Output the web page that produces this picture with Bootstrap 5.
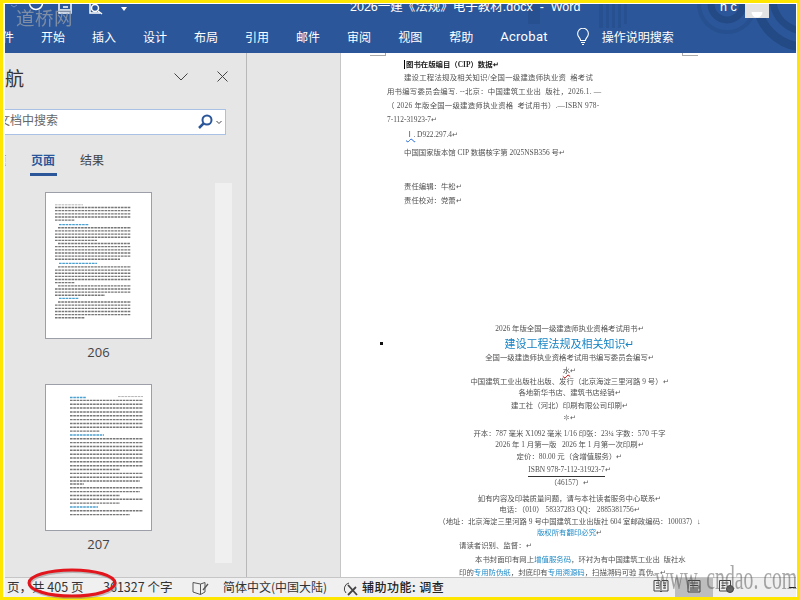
<!DOCTYPE html>
<html lang="zh">
<head>
<meta charset="utf-8">
<title>Word</title>
<link href="https://cdn.jsdelivr.net/npm/bootstrap@5.3.0/dist/css/bootstrap.min.css" rel="stylesheet">
<style>
html,body{margin:0;height:600px;overflow:hidden;background:#ffe600}
body{font-family:"Noto Sans CJK SC","Liberation Sans",sans-serif}
.wframe{width:800px;height:600px;padding:3px 3px 3px 3px;overflow:hidden;position:relative}
.wwin{width:794px;height:594px;background:#fff;border:solid #fff;border-width:1px 1px 0 2px;overflow:hidden}
.wtop{height:49px;background:#2b579a;color:#fff;position:relative;overflow:hidden;flex:none}
.wdeco{position:absolute;left:0;top:0}
.wtitle{height:22px;overflow:hidden;position:relative;font:12.5px/14px "Liberation Sans","Noto Sans CJK SC",sans-serif}
.wtitle-t{margin-left:345px;margin-top:-4px;white-space:nowrap}
.wuser{position:absolute;left:715px;top:-4px;font:12.5px/14px "Liberation Sans",sans-serif;white-space:pre}
.wavatar{position:absolute;left:740px;top:0;width:24px;height:14px;background:#e3e3e3;overflow:hidden}
.wtabs{height:27px;font-size:12px;line-height:21px;gap:27px;margin-left:-15px;white-space:nowrap}
.wtabs .wac{font:13px/21px "Roboto","Liberation Sans",sans-serif;letter-spacing:.3px}
.wtell{margin-left:1px;margin-right:-15px;height:21px}
.wmain{height:524px;flex:none}
.wnav{width:241px;background:#e6e6e6;position:relative;flex:none}
.wnavhead{height:56px;font-size:19px;line-height:24px;padding-top:13px;position:relative}
.wnavh{margin-left:-19px;color:#333;white-space:nowrap}
.wnavbtn{position:absolute}
.wchev{left:169px;top:20px}
.wclose{left:212px;top:18px}
.wsearch{width:221px;height:26px;background:#fff;border:1px solid #a9c1e5;border-left:0;font-size:12px;line-height:20px;color:#666;white-space:nowrap;overflow:hidden;position:relative}
.wsearch-t{margin-left:-19px}
.wsicon{position:absolute;left:193px;top:4px}
.wstabs{height:33px;margin-top:15px;font-size:12px;line-height:20px;color:#444;position:relative;white-space:nowrap;gap:25px;margin-left:-23px}
.wstab-on{color:#2b579a;font-weight:700;position:relative}
.wstab-on::after{content:"";position:absolute;left:-1px;right:-2px;top:23px;height:3px;background:#2b579a}
.wthumbs{padding-left:40px;padding-top:9px;position:relative}
.wtrack{position:absolute;left:210px;top:0;width:17px;height:380px;background:#f0f0f0}
.wthumb{display:block;width:107px;height:147px;background:#fff;border:1px solid #9c9fa8}
.wthumb g{filter:blur(.35px)}
.wnum{width:107px;height:45px;text-align:center;font:13px/26px "Open Sans","Liberation Sans",sans-serif;color:#444}
.wgap{width:95px;background:#e6e6e6;border-left:1px solid #b8b8b8;border-right:1px solid #c6c6c6;flex:none}
.wpage{flex:1;position:relative;overflow:hidden;background:#fff}
.wcrop{position:absolute;top:0;width:16px;height:3px;border-bottom:1px solid #aaa}
.wcl{left:29px;border-right:1px solid #aaa}
.wcr{left:341px;border-left:1px solid #aaa}
.wdoc{font:7.4px/12px "Liberation Serif","Noto Sans CJK SC",serif;color:#505050;white-space:nowrap;filter:blur(.25px)}
.wdoc b{font-weight:400;color:#1f8ac7}
.ln{height:12px}
.lc{text-align:center;padding-left:2px}
.ll{padding-left:46px}
.lm{padding-left:65px}
.lt{padding-left:63px}
.lp1{padding-left:118px}
.lp2{padding-left:134px}
.wj{letter-spacing:.22px}
.wdark{color:#222;font-weight:700}
.whead{color:#1784c3!important;font-size:11px;line-height:12px}
.wul{border-bottom:1px solid #333;display:inline-block;line-height:10px;height:12px}
.wsq{position:absolute;left:39px;top:289px;width:3px;height:3px;background:#111}
.wred{text-decoration:underline wavy #c00 .5px}
.wblu{text-decoration:underline wavy #2468d8 .5px}
.wcur{border-left:1px solid #000;padding-left:1px}
.gm{margin-top:-1px}.g0{margin-top:0}.g1{margin-top:1px}.g2{margin-top:2px}.g3{margin-top:3px}.g4{margin-top:4px}.g6{margin-top:6px}.g22{margin-top:22px}.g116{margin-top:116px}
.wstat{height:20px;background:#f0f0f0;border-top:1px solid #c6c6c6;font-size:12px;line-height:17px;color:#333;position:relative;white-space:nowrap;overflow:hidden;flex:none}
.wst1{margin-left:2px;width:96px;flex:none;font-size:12.5px}
.wst2{width:89px;flex:none;font-size:12.5px}
.wst3{width:31px;flex:none}
.wst4{width:120px;flex:none}
.wst5{width:19px;flex:none}
.wst6{font-weight:500;color:#222;width:285px;flex:none;letter-spacing:.5px}
.wview{width:28px;height:19px;flex:none}
.wview-on{background:#bdbdbd;width:38px}
.wzoom{width:7px;height:1px;background:#222;align-self:center;margin-left:48px;flex:none}
.wmark1{position:absolute;left:16px;top:5px;font:18.5px/28px "Liberation Serif","Noto Sans CJK SC",serif;color:#8d97a5;letter-spacing:.5px;opacity:.85;white-space:nowrap;pointer-events:none}
.wmark2{position:absolute;left:655px;top:561px;font:34px/34px "Liberation Serif",serif;color:#555;opacity:.5;white-space:nowrap;transform:scaleX(.58);transform-origin:left top;pointer-events:none}
.wellipse{position:absolute;left:26px;top:566px;pointer-events:none}
</style>
</head>
<body>
<div class="wframe">
<div class="wwin d-flex flex-column">
  <div class="wtop">
    <svg class="wdeco" width="792" height="49" viewBox="0 0 792 49" fill="none">
      <g fill="#275091">
        <rect x="523" y="0" width="12" height="20"/><rect x="594" y="0" width="4" height="24"/><rect x="601" y="0" width="3" height="24"/><rect x="607" y="0" width="3" height="24"/><rect x="613" y="0" width="3" height="24"/><rect x="619" y="0" width="3" height="20"/>
      </g>
      <circle cx="722" cy="0" r="16" stroke="#244a85" stroke-width="7"/>
      <circle cx="722" cy="0" r="28" stroke="#26508f" stroke-width="4"/>
      <circle cx="800" cy="-5" r="48" stroke="#244a85" stroke-width="9"/>
      <circle cx="800" cy="-5" r="32" stroke="#244a85" stroke-width="7"/>
      <g stroke="#fff" stroke-width="1.5">
        <circle cx="31" cy="-1" r="6.5" fill="none"/>
        <path d="M29 -2v-4h5"/>
        <path d="M55 6h10M54 0v9h12V0M58 3h5" fill="none"/>
        <path d="M85 -2v11h10" fill="none"/>
        <circle cx="90" cy="4" r="3.5" fill="none"/>
        <path d="M93 7l4 3" />
      </g>
      <path d="M116 3h6l-3 4z" fill="#fff"/>
      <path d="M6 1l3 2 3-2" stroke="#6d8cbc"/>
    </svg>
    <div class="wtitle"><div class="wtitle-t">2026一建《法规》电子教材.docx&nbsp; -&nbsp; Word</div></div>
    <div class="wuser">h c</div>
    <div class="wavatar"><svg width="24" height="14" viewBox="0 0 24 14"><circle cx="12" cy="0" r="5.5" fill="#fff"/><path d="M3 14c0-6 4-8 9-8s9 2 9 8z" fill="#fff"/></svg></div>
    <div class="wtabs d-flex position-relative">
      <span>文件</span><span>开始</span><span>插入</span><span>设计</span><span>布局</span><span>引用</span><span>邮件</span><span>审阅</span><span>视图</span><span>帮助</span><span class="wac">Acrobat</span>
      <span class="wtell d-flex align-items-center"><svg width="14" height="18" viewBox="0 0 14 18" fill="none" stroke="#fff" stroke-width="1.1"><path d="M4.6 12.5c0-2.4-3-3.6-3-6.8a5.4 5.4 0 0 1 10.8 0c0 3.2-3 4.4-3 6.8z"/><path d="M5 14.5h4M6 16.5h2"/></svg></span>
      <span>操作说明搜索</span>
    </div>
  </div>
  <div class="wmain d-flex">
    <div class="wnav">
      <div class="wnavhead"><div class="wnavh">导航</div>
        <svg class="wnavbtn wchev" width="14" height="8" viewBox="0 0 14 8" fill="none" stroke="#444"><path d="M.5.5 7 7l6.5-6.5"/></svg>
        <svg class="wnavbtn wclose" width="11" height="11" viewBox="0 0 11 11" fill="none" stroke="#444"><path d="M.5.5l10 10M10.5.5l-10 10"/></svg>
      </div>
      <div class="wsearch"><div class="wsearch-t">在文档中搜索</div>
        <svg class="wsicon" width="24" height="16" viewBox="0 0 24 16" fill="none"><circle cx="9" cy="6" r="4.5" stroke="#2b579a" stroke-width="2"/><path d="M5.5 9.5 1 14" stroke="#2b579a" stroke-width="2.5"/><path d="M18.5 7l2.500 2.500L23.500 7" stroke="#444"/></svg>
      </div>
      <div class="wstabs d-flex"><span>标题</span><span class="wstab-on">页面</span><span>结果</span></div>
      <div class="wthumbs">
        <div class="wtrack"></div>
        <svg class="wthumb" viewBox="0 0 105 145" fill="none" stroke="#777" stroke-width="1.5" stroke-dasharray="2.6 .7">
          <g transform="translate(0 1) scale(1 .9)">
          <path d="M9 12h28" stroke="#aaa" stroke-width=".9"/>
          <path d="M9 15h76M9 18.5h76M9 22h76M9 25.5h76M9 29h20"/>
          <path d="M13 34h30" stroke="#4aa0d0"/>
          <path d="M12 37.5h73M9 41h76M9 44.5h76M9 48h76M9 51.5h42M12 55h72M9 58.5h76M9 62h76M9 65.5h76M9 69h76M9 72.5h65"/>
          <path d="M13 77h38" stroke="#4aa0d0"/>
          <path d="M12 81h73M9 84.5h76M9 88h76M9 91.5h76M9 95h76M9 98.5h20M12 102h73M9 105.5h76M9 109h76M9 112.5h50"/>
          <path d="M13 116h20" stroke="#4aa0d0"/>
          <path d="M12 120h73M9 123.5h76M9 127h76M9 130.5h76M9 134h76M9 137.5h30"/>
          </g>
        </svg>
        <div class="wnum">206</div>
        <svg class="wthumb" viewBox="0 0 105 145" fill="none" stroke="#777" stroke-width="1.5" stroke-dasharray="2.6 .7">
          <g transform="translate(0 1) scale(1 .96)">
          <path d="M24 12h16" stroke="#4aa0d0"/><path d="M72 11h25" stroke="#aaa" stroke-width=".9"/>
          <path d="M24 15h73M24 19h73M24 23h73M24 27h73M24 31h73M24 35h73M24 39h73M24 43h73M24 47h30"/>
          <path d="M24 51h34" stroke="#4aa0d0"/>
          <path d="M24 55h73M24 59h73M24 63h73M24 67h73M24 71h73M24 75h73M24 79h73M24 83h73M24 87h50M24 91h73M24 95h73M24 99h70M24 102h14M24 106h73M24 110h70M24 114h50M24 118h73M24 122h50"/>
          <path d="M24 126h28" stroke="#4aa0d0"/>
          <path d="M24 130h73M24 134h60"/>
          </g>
        </svg>
        <div class="wnum">207</div>
      </div>
    </div>
    <div class="wgap"></div>
    <div class="wpage">
      <div class="wcrop wcl"></div><div class="wcrop wcr"></div>
      <div class="wsq"></div>
      <div class="wdoc">
        <div class="ln lt wdark g6"><span class="wcur">图书在版编目（CIP）数据</span>↵</div>
        <div class="ln lt wj g1">建设工程法规及相关知识/全国一级建造师执业资&nbsp; 格考试</div>
        <div class="ln ll wj g2">用书编写委员会编写. --北京：中国建筑工业出&nbsp; 版社，2026.1. —</div>
        <div class="ln ll wj g2">（ 2026 年版全国一级建造师执业资格&nbsp; 考试用书）.—ISBN 978-</div>
        <div class="ln ll g2">7-112-31923-7↵</div>
        <div class="ln lm g3"><span class="wblu">Ⅰ.</span> D922.297.4↵</div>
        <div class="ln lt g6">中国国家版本馆 CIP 数据核字第 2025NSB356 号↵</div>
        <div class="ln lt g22">责任编辑：牛松↵</div>
        <div class="ln lt g2">责任校对：党蕾↵</div>
        <div class="ln lc g116">2026 年版全国一级建造师执业资格考试用书↵</div>
        <div class="ln lc whead g3">建设工程法规及相关知识↵</div>
        <div class="ln lc g2">全国一级建造师执业资格考试用书编写委员会编写↵</div>
        <div class="ln lc g1"><span class="wred">水</span>↵</div>
        <div class="ln lc gm">中国建筑工业出版社出版、发行（北京海淀三里河路 9 号）↵</div>
        <div class="ln lc gm">各地新华书店、建筑书店经销↵</div>
        <div class="ln lc g1">建工社（河北）印刷有限公司印刷↵</div>
        <div class="ln lc g0">✽↵</div>
        <div class="ln lc g4">开本：787 毫米 X1092 毫米 1/16 印张：23¼ 字数：570 千字</div>
        <div class="ln lc gm">2026 年 1 月第一版&nbsp;&nbsp; 2026 年 1 月第一次印刷↵</div>
        <div class="ln lc g0">定价：80.00 元（含增值服务）↵</div>
        <div class="ln lc g1"><span class="wul">ISBN 978-7-112-31923-7</span>↵</div>
        <div class="ln lc g1">（46157）↵</div>
        <div class="ln lc g4">如有内容及印装质量问题，请与本社读者服务中心联系↵</div>
        <div class="ln lc gm">电话：（010） 58337283 QQ： 2885381756↵</div>
        <div class="ln lc g0">（地址：北京海淀三里河路 9 号中国建筑工业出版社 604 室邮政编码：100037）↓</div>
        <div class="ln lc gm"><b>版权所有翻印必究</b>↵</div>
        <div class="ln lp1 g1">请读者识别、监督：↵</div>
        <div class="ln lp2 g2">本书封面印有网上<b>增值服务码</b>，环衬为有中国建筑工业出&nbsp; 版社水</div>
        <div class="ln lp1 g1">印的<b>专用防伪纸</b>，封底印有<b>专用溯源码</b>，扫描<span class="wblu">溯码可验</span> 真伪。↵</div>
      </div>
    </div>
  </div>
  <div class="wstat d-flex">
    <span class="wst1">页，共 405 页</span>
    <span class="wst2">361327 个字</span>
    <span class="wst3"><svg width="17" height="15" viewBox="0 0 17 15" fill="none" stroke="#555"><path d="M8.5 3 1 1.5V11l7.5 2.5V3zM8.5 3 13 1.5V11l-4.5 2.5"/><path d="M11 9l5-6" stroke-width="1.3"/></svg></span>
    <span class="wst4">简体中文(中国大陆)</span>
    <span class="wst5"><svg width="16" height="16" viewBox="0 0 16 16" fill="none" stroke="#444"><path d="M6 2a6 6 0 0 0-3 10"/><path d="M5 4l9 10M13 6l-8 8" stroke-width="1.8"/></svg></span>
    <span class="wst6">辅助功能: 调查</span>
    <span class="wview d-flex justify-content-center"><svg width="16" height="16" viewBox="0 0 16 16" fill="none" stroke="#444"><path d="M1 2.5h6l1 1 1-1h6V13H9l-1 1-1-1H1zM8 3.5V14M3 5h3M3 7.5h3M3 10h3M10 5h3M10 7.5h3M10 10h3"/></svg></span>
    <span class="wview wview-on d-flex justify-content-center"><svg width="16" height="16" viewBox="0 0 16 16" fill="none" stroke="#444"><path d="M2 2.5h12V14H2zM4 5h8M4 7.5h8M4 10h8M4 12h8"/></svg></span>
    <span class="wview d-flex justify-content-center"><svg width="18" height="16" viewBox="0 0 18 16" fill="none" stroke="#444"><path d="M1.5 2.5h11V13h-11zM3.5 5h7M3.5 7.5h4M3.5 10h4"/><circle cx="12" cy="11" r="3.5" fill="#666"/></svg></span>
    <span class="wzoom"></span>
  </div>
</div>
<div class="wmark1">道桥网</div>
<div class="wmark2">www. cndao. com</div>
<svg class="wellipse" width="96" height="34" viewBox="0 0 96 34" fill="none">
  <ellipse cx="47" cy="18.5" rx="43" ry="13" stroke="#888" stroke-width="3" opacity=".5"/>
  <ellipse cx="46" cy="17" rx="43" ry="13" stroke="#e2141c" stroke-width="3"/>
</svg>
</div>
</body>
</html>
